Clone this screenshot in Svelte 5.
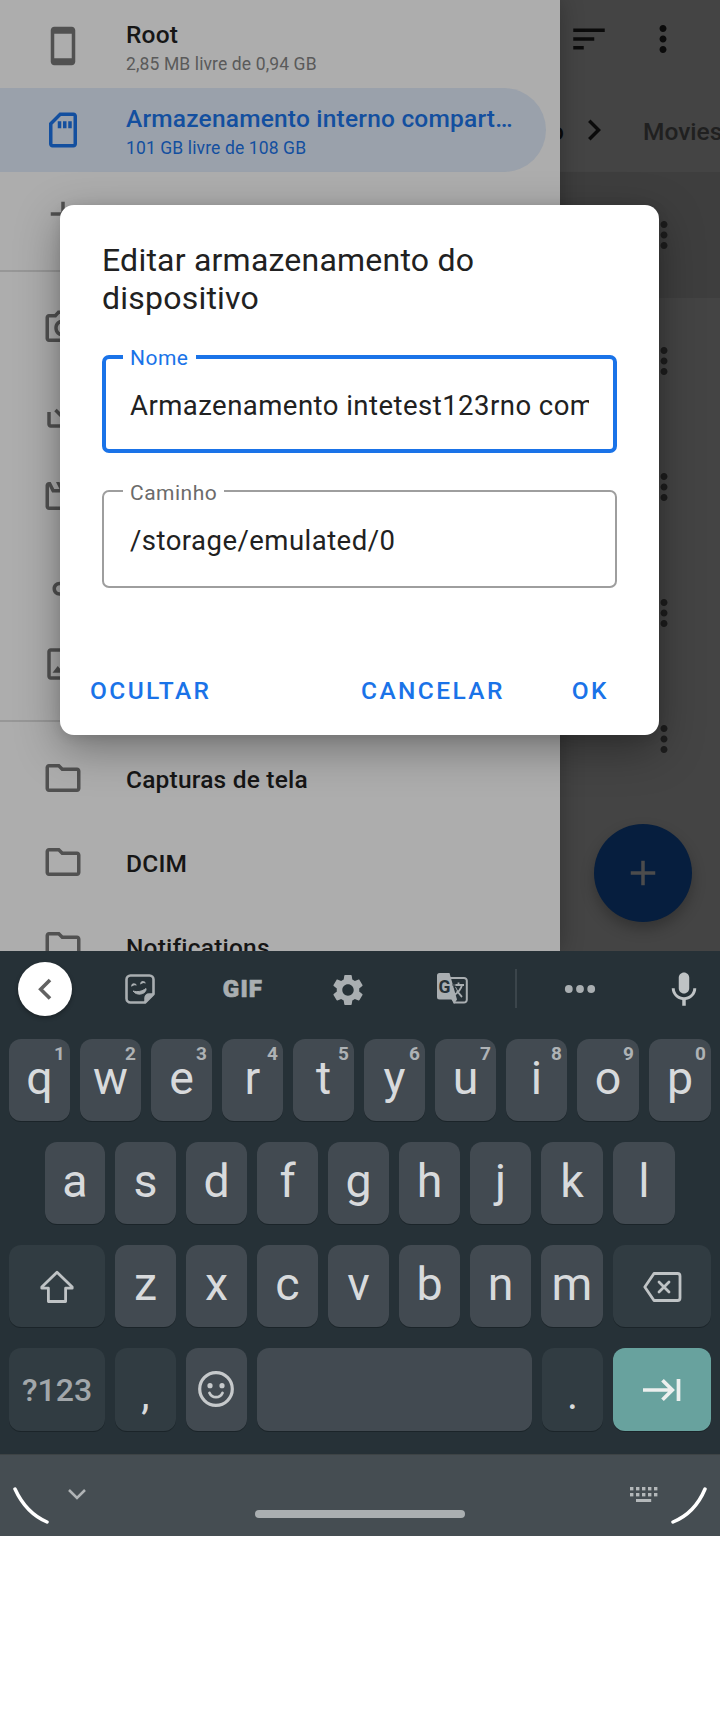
<script>
  const paths = {
    phone: 'M17 1.01L7 1c-1.1 0-2 .9-2 2v18c0 1.1.9 2 2 2h10c1.1 0 2-.9 2-2V3c0-1.1-.9-1.99-2-1.99zM17 19H7V5h10v14z',
    sd: 'M18 2h-8L4 8v12c0 1.1.9 2 2 2h12c1.1 0 2-.9 2-2V4c0-1.1-.9-2-2-2zm0 18H6V8.83L10.83 4H18v16zM9 7h2v4H9zM12 7h2v4h-2zM15 7h2v4h-2z',
    add: 'M19 13h-6v6h-2v-6H5v-2h6V5h2v6h6v2z',
    camera: 'M14.12 4l1.83 2H20v12H4V6h4.05l1.83-2h4.24M15 2H9L7.17 4H4c-1.1 0-2 .9-2 2v12c0 1.1.9 2 2 2h16c1.1 0 2-.9 2-2V6c0-1.1-.9-2-2-2h-3.17L15 2zm-3 7c1.65 0 3 1.35 3 3s-1.35 3-3 3-3-1.35-3-3 1.35-3 3-3m0-2c-2.76 0-5 2.24-5 5s2.24 5 5 5 5-2.24 5-5-2.24-5-5-5z',
    save: 'M19 12v7H5v-7H3v7c0 1.1.9 2 2 2h14c1.1 0 2-.9 2-2v-7h-2zm-6 .67l2.59-2.58L17 11.5l-5 5-5-5 1.41-1.41L11 12.67V3h2z',
    movie: 'M4 6.47L5.76 10H20v8H4V6.47M22 4h-4l2 4h-3l-2-4h-2l2 4h-3l-2-4H8l2 4H7L5 4H4c-1.1 0-1.99.9-1.99 2L2 18c0 1.1.9 2 2 2h16c1.1 0 2-.9 2-2V4z',
    music: 'M12 3v10.55c-.59-.34-1.27-.55-2-.55-2.21 0-4 1.79-4 4s1.79 4 4 4 4-1.79 4-4V7h4V3h-6zm-2 16c-1.1 0-2-.9-2-2s.9-2 2-2 2 .9 2 2-.9 2-2 2z',
    photo: 'M19 5v14H5V5h14m0-2H5c-1.1 0-2 .9-2 2v14c0 1.1.9 2 2 2h14c1.1 0 2-.9 2-2V5c0-1.1-.9-2-2-2zm-4.86 8.86l-3 3.87L9 13.14 6 17h12l-3.86-5.14z',
    folder: 'M9.17 6l2 2H20v10H4V6h5.17M10 4H4c-1.1 0-1.99.9-1.99 2L2 18c0 1.1.9 2 2 2h16c1.1 0 2-.9 2-2V8c0-1.1-.9-2-2-2h-8l-2-2z',
    sort: 'M3 18h6v-2H3v2zM3 6v2h18V6H3zm0 7h12v-2H3v2z',
    more: 'M12 8c1.1 0 2-.9 2-2s-.9-2-2-2-2 .9-2 2 .9 2 2 2zm0 2c-1.1 0-2 .9-2 2s.9 2 2 2 2-.9 2-2-.9-2-2-2zm0 6c-1.1 0-2 .9-2 2s.9 2 2 2 2-.9 2-2-.9-2-2-2z',
    right: 'M10 6L8.59 7.41 13.17 12l-4.58 4.59L10 18l6-6z',
    gear: 'M19.43 12.98c.04-.32.07-.64.07-.98s-.03-.66-.07-.98l2.11-1.65c.19-.15.24-.42.12-.64l-2-3.46c-.12-.22-.39-.3-.61-.22l-2.49 1c-.52-.4-1.08-.73-1.69-.98l-.38-2.65C14.46 2.18 14.25 2 14 2h-4c-.25 0-.46.18-.49.42l-.38 2.65c-.61.25-1.17.59-1.69.98l-2.49-1c-.23-.09-.49 0-.61.22l-2 3.46c-.13.22-.07.49.12.64l2.11 1.65c-.04.32-.07.65-.07.98s.03.66.07.98l-2.11 1.65c-.19.15-.24.42-.12.64l2 3.46c.12.22.39.3.61.22l2.49-1c.52.4 1.08.73 1.69.98l.38 2.65c.03.24.24.42.49.42h4c.25 0 .46-.18.49-.42l.38-2.65c.61-.25 1.17-.59 1.69-.98l2.49 1c.23.09.49 0 .61-.22l2-3.46c.12-.22.07-.49-.12-.64l-2.11-1.65zM12 15.8c-2.1 0-3.8-1.700-3.800-3.800s1.700-3.800 3.800-3.800 3.800 1.700 3.800 3.800-1.700 3.800-3.800 3.800z',
    mic: 'M12 14c1.66 0 2.99-1.34 2.99-3L15 5c0-1.66-1.34-3-3-3S9 3.34 9 5v6c0 1.66 1.34 3 3 3zm5.3-3c0 3-2.54 5.1-5.3 5.1S6.700 14 6.700 11H5c0 3.41 2.72 6.23 6 6.72V21h2v-3.28c3.28-.48 6-3.3 6-6.72h-1.700z'
  };
  const libraries = ['camera', 'save', 'movie', 'music', 'photo'];
  const folders = ['Capturas de tela', 'DCIM', 'Notifications'];
  const row1 = 'qwertyuiop'.split('');
  const row2 = 'asdfghjkl'.split('');
  const row3 = 'zxcvbnm'.split('');
</script>

{#snippet icon(name, size = 42)}
  <svg class="icon" width={size} height={size} viewBox="0 0 24 24" fill="currentColor"><path d={paths[name]} /></svg>
{/snippet}

<div class="screen">
  <div class="app">
    <nav class="drawer">
      <div class="row">
        {@render icon('phone')}
        <div class="labels"><b>Root</b><small>2,85 MB livre de 0,94 GB</small></div>
      </div>
      <div class="row selected">
        {@render icon('sd')}
        <div class="labels"><b>Armazenamento interno compart…</b><small>101 GB livre de 108 GB</small></div>
      </div>
      <div class="row">{@render icon('add')}</div>
      <hr />
      {#each libraries as lib}
        <div class="row">{@render icon(lib)}</div>
      {/each}
      <hr />
      {#each folders as name}
        <div class="row">{@render icon('folder')}<div class="labels single"><b>{name}</b></div></div>
      {/each}
    </nav>

    <main class="pane">
      <div class="toolbar">{@render icon('sort')}{@render icon('more')}</div>
      <div class="crumbs"><span class="tail">o</span>{@render icon('right')}<span class="crumb">Movies</span></div>
      {#each [0, 1, 2, 3, 4] as i}
        <div class="file" class:active={i === 0}>{@render icon('more')}</div>
      {/each}
      <div class="fab">{@render icon('add')}</div>
    </main>

    <div class="dialog">
      <h1>Editar armazenamento do dispositivo</h1>
      <div class="field focused"><label for="nome">Nome</label><div class="value" id="nome">Armazenamento intetest123rno compartilhado</div></div>
      <div class="field"><label for="caminho">Caminho</label><div class="value" id="caminho">/storage/emulated/0</div></div>
      <div class="actions"><span>OCULTAR</span><span class="cancel">CANCELAR</span><span>OK</span></div>
    </div>
  </div>

  <div class="keyboard">
    <div class="strip">
      <div class="back">
        <svg width="54" height="54" viewBox="0 0 54 54" fill="none" stroke="#626262" stroke-width="3.6"><path d="M32 18l-9.300 9.300 9.300 9.300" /></svg>
      </div>
      <div class="cell sticker">
        <svg width="30" height="30" viewBox="0 0 30 30" fill="none" stroke="#a9aeb1" stroke-width="2.600" stroke-linejoin="round">
          <path d="M20 28.500H5.500a4 4 0 0 1-4-4v-19a4 4 0 0 1 4-4h19a4 4 0 0 1 4 4V20z" />
          <path d="M20 28.500V24a4 4 0 0 1 4-4h4.500z" fill="#a9aeb1" stroke-width="1.500" />
          <path d="M8 17c4.500 1.300 9 .5 13-2.500 1 5-8.500 8.500-13 2.500z" fill="#a9aeb1" stroke-width="1" />
          <g fill="#a9aeb1" stroke="none"><path d="M6.200 12.800c-.5-4.300 4.600-4.800 5.600-1.200l-2.500-.3z" /><path d="M15.200 10.600c-.5-4.300 4.600-4.800 5.600-1.200l-2.500-.3z" /></g>
        </svg>
      </div>
      <div class="cell gif">GIF</div>
      <div class="cell gear">{@render icon('gear', 36)}</div>
      <div class="cell">
        <svg width="31" height="31" viewBox="0 0 31 31">
          <path d="M12 5h15a2.800 2.800 0 0 1 2.800 2.800v19A2.800 2.800 0 0 1 27 29.600H17.500l-3-5" fill="none" stroke="#a9aeb1" stroke-width="2" />
          <path d="M2.500 0H12.500l7.500 26.500-3 4.500-2-4.500H2.500A2.500 2.500 0 0 1 0 24V2.500A2.500 2.500 0 0 1 2.500 0z" fill="#a9aeb1" />
          <text x="1.500" y="20" font-size="17.500" font-weight="700" fill="#263137">G</text>
          <path d="M16 12h11M21.500 9.500V12M25 12c-1 4-3.500 7-7 9.500M18 14c1.500 4 4 7 7 10" fill="none" stroke="#a9aeb1" stroke-width="1.800" />
          <path d="M15.500 12h3M17.300 14l2 4" fill="none" stroke="#263137" stroke-width="1.500" />
        </svg>
      </div>
      <div class="cell"><i class="sep"></i></div>
      <div class="cell">
        <svg width="32" height="10" viewBox="0 0 32 10" fill="#a9aeb1"><circle cx="4.800" cy="5" r="3.900" /><circle cx="16" cy="5" r="3.900" /><circle cx="27.200" cy="5" r="3.900" /></svg>
      </div>
      <div class="cell mic">{@render icon('mic')}</div>
    </div>

    <div class="keys">
      {#each row1 as k, i}
        <div class="key" class:wide={i > 7}>{k}<sup>{(i + 1) % 10}</sup></div>
      {/each}
    </div>
    <div class="keys second">
      {#each row2 as k, i}
        <div class="key" class:first={i === 0} class:wide={i > 6}>{k}</div>
      {/each}
    </div>
    <div class="keys">
      <div class="key dark shift low">
        <svg width="36" height="36" viewBox="0 0 36 36" fill="none" stroke="#bfc3c5" stroke-width="2.800" stroke-linejoin="round"><path d="M18 3.200L2.800 18v1.200h6.600v13.300h17.200V19.200h6.600V18z" /></svg>
      </div>
      {#each row3 as k, i}
        <div class="key" class:wide={i === 6}>{k}</div>
      {/each}
      <div class="key dark action low">
        <svg width="40" height="32" viewBox="0 0 40 32" fill="none" stroke="#bfc3c5" stroke-width="2.800" stroke-linejoin="round" stroke-linecap="round"><path d="M12 2.500h23.500a2.500 2.500 0 0 1 2.500 2.500v22a2.500 2.500 0 0 1-2.500 2.500H12L2.800 16zM17 11l10 10M27 11L17 21" /></svg>
      </div>
    </div>
    <div class="keys last">
      <div class="key dark shift sym">?123</div>
      <div class="key dark punct">,</div>
      <div class="key emoji">
        <svg width="38" height="38" viewBox="0 0 38 38" fill="none" stroke="#c6c9cb" stroke-width="3.200"><circle cx="19" cy="19" r="16.300" /><path d="M12.500 23c2.600 5.600 10.400 5.600 13 0" stroke-width="2.800" stroke-linecap="round" /><g fill="#c6c9cb" stroke="none"><circle cx="13" cy="15.700" r="2.600" /><circle cx="25" cy="15.700" r="2.600" /></g></svg>
      </div>
      <div class="key space"></div>
      <div class="key dark punct">.</div>
      <div class="key enter action">
        <svg width="40" height="24" viewBox="0 0 40 24" fill="none" stroke="#ecefee" stroke-width="3.700"><path d="M1 12h30M20.500 2.200L30.300 12l-9.800 9.800M36.500 1v22" /></svg>
      </div>
    </div>
  </div>

  <div class="sysbar">
    <svg class="curve" width="36" height="38" viewBox="0 0 36 38"><path d="M2 2Q13 26 34 35" /></svg>
    <svg class="hide" width="20" height="14" viewBox="0 0 20 14"><path d="M2 2l8 8 8-8" fill="none" stroke="#b0b4b6" stroke-width="2.500" /></svg>
    <i class="pill"></i>
    <svg class="switch" width="28" height="16" viewBox="0 0 28 16" fill="#b4b8ba">
      {#each [0, 6, 12, 18, 24] as x}
        <rect {x} y="0" width="3.400" height="3.400" /><rect {x} y="6" width="3.400" height="3.400" />
      {/each}
      <rect x="6" y="12" width="15.200" height="3" />
    </svg>
    <svg class="curve" width="36" height="38" viewBox="0 0 36 38"><path d="M34 2Q24 26 2 35" /></svg>
  </div>
</div>

<style>
  :global(body) { margin: 0; background: #fff; }
  .screen { width: 720px; height: 1712px; overflow: hidden; font-family: Roboto, "Noto Sans", sans-serif; background: #fff; }
  .screen * { box-sizing: border-box; }
  svg { display: block; flex: none; }
  .app { position: relative; display: flex; width: 720px; height: 951px; overflow: hidden; }

  .drawer { position: relative; z-index: 1; width: 560px; flex: none; padding-top: 4px; background: #adadad; color: #515151; box-shadow: 0 0 22px rgba(0, 0, 0, .28); }
  .row { display: flex; align-items: center; height: 84px; padding-left: 42px; gap: 42px; }
  .labels { display: flex; flex-direction: column; padding-top: 2px; white-space: nowrap; }
  .labels b { font-size: 24.5px; line-height: 33px; font-weight: 500; letter-spacing: .2px; color: #161616; }
  .labels small { padding-top: 1px; font-size: 17.5px; line-height: 24px; letter-spacing: .12px; color: #5a5a5a; }
  .labels.single { padding-top: 3px; }
  .selected, .selected b, .selected small { color: #134f9f; }
  .selected { width: 546px; border-radius: 0 42px 42px 0; background: #9aa1ab; }
  hr { height: 2px; margin: 14px 0; border: 0; background: #979797; }

  .pane { position: relative; flex: 1; overflow: hidden; background: #444; color: #0b0b0b; }
  .toolbar { display: flex; gap: 32px; height: 88px; padding: 18px 0 0 8px; }
  .crumbs { display: flex; align-items: center; height: 84px; font-size: 24.5px; font-weight: 500; line-height: 30px; }
  .tail { width: 13px; display: flex; justify-content: flex-end; padding: 3px 9px 0 0; }
  .crumb { margin-left: 28px; padding-top: 3px; color: #202020; }
  .file { display: flex; align-items: center; height: 126px; padding-left: 83px; color: #1d1d1d; }
  .active { background: #3e3e3e; }
  .fab { position: absolute; left: 34px; top: 824px; width: 98px; height: 98px; border-radius: 50%; display: grid; place-items: center; background: #061e3e; color: #4c4c4c; box-shadow: 0 7px 14px rgba(0, 0, 0, .25); }

  .dialog { position: absolute; z-index: 2; left: 60px; top: 205px; width: 599px; height: 530px; padding: 36px 42px 0; border-radius: 14px; background: #fff; box-shadow: 0 14px 44px rgba(0, 0, 0, .34), 0 2px 12px rgba(0, 0, 0, .1); }
  h1 { margin: 0 0 38px; font-size: 32px; line-height: 38px; font-weight: 400; letter-spacing: .22px; color: #212121; }
  .field { position: relative; height: 98px; margin-bottom: 37px; padding: 0 26px; border: 2px solid #9e9e9e; border-radius: 7px; color: #6b6b6b; }
  .field.focused { padding: 0 24px; border: 4px solid #1a73e8; color: #1a73e8; }
  label { position: absolute; left: 19px; top: -12px; padding: 0 7px; background: #fff; font-size: 21px; line-height: 26px; letter-spacing: .5px; }
  .focused label { left: 17px; top: -14px; }
  .value { overflow: hidden; white-space: nowrap; font-size: 27.5px; line-height: 40px; padding-top: 29px; letter-spacing: .47px; color: #212121; }
  .focused .value { padding-top: 27px; }
  .actions { display: flex; margin: 88px -35px 0 -12px; font-size: 24.5px; line-height: 30px; font-weight: 500; letter-spacing: 2.4px; color: #1a73e8; }
  .actions .cancel { margin: 0 67px 0 auto; }
  .actions span:last-child { margin-right: 43px; }

  .keyboard { height: 503px; background: #263137; color: #d8dadc; }
  .strip { display: grid; grid-template-columns: 94px 93px 112px 98px 110px 18px 110px 98px; align-items: center; height: 88px; padding-bottom: 13px; color: #a9aeb1; }
  .cell { display: grid; place-items: center; }
  .back { width: 54px; height: 54px; margin-left: 18px; border-radius: 50%; background: #fff; box-shadow: 0 2px 4px rgba(0, 0, 0, .3); }
  .sticker { padding-right: 2px; }
  .gif { font-size: 24px; line-height: 28px; font-weight: 900; letter-spacing: 1.2px; -webkit-text-stroke: .7px #a9aeb1; }
  .gear { padding-top: 3px; }
  .sep { width: 2px; height: 39px; background: #3b454b; }
  .mic { padding-top: 2px; color: #bfc3c5; }
  .keys { display: flex; gap: 10px; height: 82px; margin-bottom: 21px; padding-left: 9px; }
  .second { padding-left: 45px; }
  .key { position: relative; display: flex; justify-content: center; width: 61px; flex: none; border-radius: 12px; background: #424a51; box-shadow: 0 1px 0 #1b2429; font-size: 46.5px; line-height: 78px; }
  .first { width: 60px; }
  .wide { width: 62px; }
  .dark { background: #313c42; }
  .shift { width: 96px; }
  .action { width: 98px; }
  .shift, .action, .emoji { align-items: center; }
  .low { padding-top: 2px; }
  .emoji { padding-bottom: 2px; padding-right: 1px; }
  sup { position: absolute; right: 5px; top: 4px; font-size: 19px; line-height: 22px; font-weight: 700; color: #aeb2b5; }
  .last { height: 83px; margin-bottom: 0; }
  .sym { font-size: 32px; font-weight: 500; color: #a2a7aa; }
  .punct { font-size: 42px; line-height: 94px; }
  .space { width: 275px; }
  .enter { background: #68a29e; }

  .sysbar { display: flex; height: 82px; background: #454d52; border-top: 1px solid #3d4345; }
  .curve { margin: 32px 0 0 13px; fill: none; stroke: #fff; stroke-width: 3.5; stroke-linecap: round; }
  .hide { margin: 33px 0 0 18px; }
  .pill { width: 210px; height: 8px; margin: 55px 0 0 168px; border-radius: 4px; background: #aaafb1; }
  .switch { margin: 32px 0 0 165px; }
</style>
